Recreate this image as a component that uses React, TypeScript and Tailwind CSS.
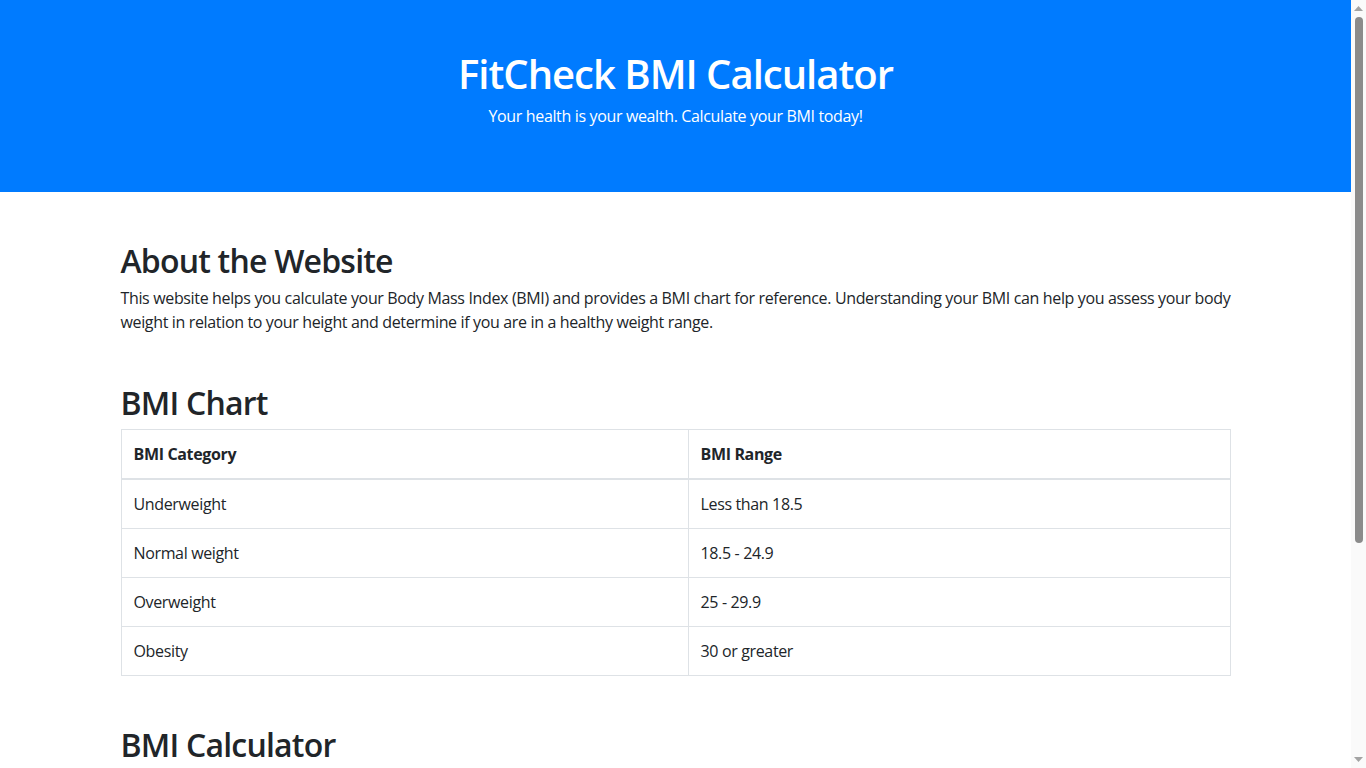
import React, { useState } from 'react';

const rows = [
  { category: 'Underweight', range: 'Less than 18.5' },
  { category: 'Normal weight', range: '18.5 - 24.9' },
  { category: 'Overweight', range: '25 - 29.9' },
  { category: 'Obesity', range: '30 or greater' },
];

const ScrollRail = () => (
  <div className="w-[15px] shrink-0 h-full bg-[#fafafa] flex flex-col items-center">
    <div className="h-[17px] flex items-center justify-center">
      <svg width="9" height="5" viewBox="0 0 9 5"><path d="M4.5 0 9 5H0z" fill="#a3a3a3" /></svg>
    </div>
    <div className="w-2 h-[526px] rounded-full bg-[#8b8b8b]" />
    <div className="flex-1" />
    <div className="h-[17px] flex items-center justify-center">
      <svg width="9" height="5" viewBox="0 0 9 5"><path d="M0 0h9L4.5 5z" fill="#a3a3a3" /></svg>
    </div>
  </div>
);

export default function App() {
  const [height, setHeight] = useState('');
  const [weight, setWeight] = useState('');
  const [bmi, setBmi] = useState<number | null>(null);

  const calc = (e: React.FormEvent) => {
    e.preventDefault();
    const h = parseFloat(height) / 100;
    const w = parseFloat(weight);
    if (h > 0 && w > 0) setBmi(w / (h * h));
  };

  const cellCls = "border border-[#dee2e6] px-3 py-3 text-left align-top";
  const h2Cls = "text-[32px] leading-[38.4px] font-semibold tracking-[-0.8px] pt-[2px] mb-1.5";
  const inputCls = "w-full border border-[#ced4da] rounded px-3 py-1.5 outline-none";

  return (
    <div className="h-screen flex bg-white text-[#212529] text-base leading-6 tracking-[-0.35px] font-['Open_Sans',sans-serif]">
      <div className="flex-1 min-w-0 h-full overflow-y-auto">
        {/* Header */}
        <header className="bg-[#007bff] text-white text-center py-12">
          <h1 className="text-[40px] leading-[48px] font-semibold tracking-[-1px] pt-[2px] mb-1.5">FitCheck BMI Calculator</h1>
          <p className="mb-4">Your health is your wealth. Calculate your BMI today!</p>
        </header>

        <main className="max-w-[1140px] mx-auto px-[15px]">
          <section className="mt-12">
            <h2 className={h2Cls}>About the Website</h2>
            <p>
              This website helps you calculate your Body Mass Index (BMI) and provides a BMI chart for reference. Understanding your BMI can help you assess your body weight in relation to your height and determine if you are in a healthy weight range.
            </p>
          </section>

          <section className="mt-12">
            <h2 className={h2Cls}>BMI Chart</h2>
            <table className="w-full border-collapse border border-[#dee2e6]">
              <thead>
                <tr>
                  <th className={`${cellCls} w-[567px] border-b-2 font-bold`}>BMI Category</th>
                  <th className={`${cellCls} border-b-2 font-bold`}>BMI Range</th>
                </tr>
              </thead>
              <tbody>
                {rows.map(r => (
                  <tr key={r.category}>
                    <td className={cellCls}>{r.category}</td>
                    <td className={cellCls}>{r.range}</td>
                  </tr>
                ))}
              </tbody>
            </table>
          </section>

          <section className="mt-12 pb-[94px]">
            <h2 className={h2Cls}>BMI Calculator</h2>
            <form onSubmit={calc} className="space-y-4">
              <div>
                <label className="block mb-2">Height (cm)</label>
                <input value={height} onChange={e => setHeight(e.target.value)} className={inputCls} placeholder="Enter your height" />
              </div>
              <div>
                <label className="block mb-2">Weight (kg)</label>
                <input value={weight} onChange={e => setWeight(e.target.value)} className={inputCls} placeholder="Enter your weight" />
              </div>
              <button type="submit" className="bg-[#007bff] text-white rounded px-3 py-1.5">Calculate BMI</button>
              {bmi !== null && <p>Your BMI is {bmi.toFixed(1)}</p>}
            </form>
          </section>
        </main>
      </div>
      <ScrollRail />
    </div>
  );
}
